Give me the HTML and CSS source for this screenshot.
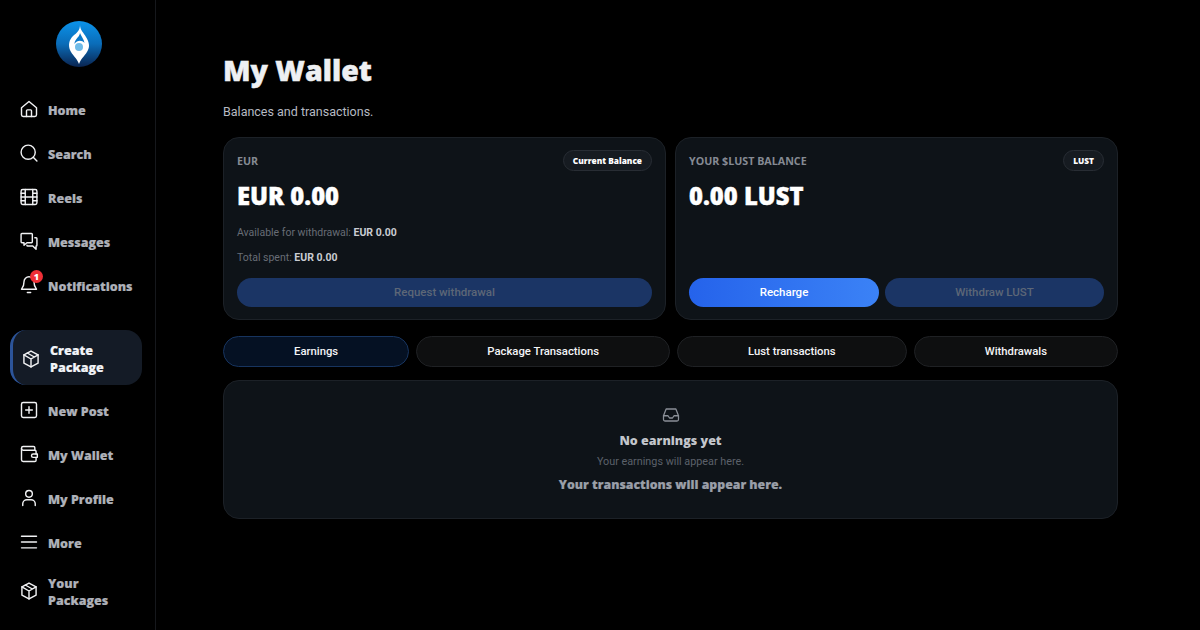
FILE: index.html
```html
<!DOCTYPE html>
<html lang="en">
<head>
    <meta charset="UTF-8">
    <title>My Wallet</title>
    <link rel="stylesheet" href="styles.css">
</head>
<body>
    <div class="layout">
        <!-- Sidebar -->
        <nav class="sidebar">
            <div class="logo">
                <svg width="46" height="46" viewBox="0 0 46 46">
                    <defs>
                        <linearGradient id="logo-bg" x1="0" y1="0" x2="0" y2="1">
                            <stop offset="0" stop-color="#0b93ea"/>
                            <stop offset="0.5" stop-color="#0a6cb8"/>
                            <stop offset="1" stop-color="#0a2450"/>
                        </linearGradient>
                    </defs>
                    <circle cx="23" cy="23" r="23" fill="url(#logo-bg)"/>
                    <path d="M24 4C24 9 28 12 30 16C33 21 34 25 32 29C30 34 25 37 23 43C21 37 16 34 14 29C12 24 13 19 17 15C21 12 24 9 24 4Z" fill="#fff"/>
                    <path d="M24 12C25 15 28 18 28.500 22C26 19 21 19 18.500 23C18.500 18 23 17 24 12Z" fill="#0a78c8"/>
                    <circle cx="23" cy="26" r="4" fill="#6fbbe8"/>
                </svg>
            </div>

            <a class="nav-item">
                <svg class="icon" viewBox="0 0 24 24"><path d="M3 10.500 12 3l9 7.500V19a2 2 0 0 1-2 2H5a2 2 0 0 1-2-2z"/><path d="M9 21v-7a1 1 0 0 1 1-1h4a1 1 0 0 1 1 1v7"/></svg>
                <span>Home</span>
            </a>
            <a class="nav-item">
                <svg class="icon" viewBox="0 0 24 24"><circle cx="11" cy="11" r="8.500"/><path d="m21.500 21.500-4.400-4.400"/></svg>
                <span>Search</span>
            </a>
            <a class="nav-item">
                <svg class="icon" viewBox="0 0 24 24"><rect x="2.500" y="3" width="19" height="18" rx="2"/><path d="M7.500 3v18M16.500 3v18M2.500 12h19M2.500 7.500h5M2.500 16.500h5M16.500 7.500h5M16.500 16.500h5"/></svg>
                <span>Reels</span>
            </a>
            <a class="nav-item">
                <svg class="icon" viewBox="0 0 24 24"><path d="M15 3H3.500a1 1 0 0 0-1 1v9a1 1 0 0 0 1 1H6v3l3.500-3H15a1 1 0 0 0 1-1V4a1 1 0 0 0-1-1z"/><path d="M19 8h1.500a1 1 0 0 1 1 1v8a1 1 0 0 1-1 1V22l-4-4h-6a1 1 0 0 1-1-1"/></svg>
                <span>Messages</span>
            </a>
            <a class="nav-item">
                <span class="icon-wrap">
                    <svg class="icon" viewBox="0 0 24 24"><path d="M6 8a6 6 0 0 1 12 0c0 7 3 8 3 9H3c0-1 3-2 3-9"/><path d="M10 21h4"/></svg>
                    <span class="badge">1</span>
                </span>
                <span>Notifications</span>
            </a>

            <a class="nav-item active">
                <svg class="icon" viewBox="0 0 24 24"><path d="M12 2.500 20.500 7v10L12 21.500 3.500 17V7z"/><path d="M3.500 7 12 12l8.500-5M12 12v9.500M7.500 4.800 16 9.600"/></svg>
                <span>Create Package</span>
            </a>
            <a class="nav-item">
                <svg class="icon" viewBox="0 0 24 24"><rect x="3" y="3" width="18" height="18" rx="2"/><path d="M12 8v8M8 12h8"/></svg>
                <span>New Post</span>
            </a>
            <a class="nav-item">
                <svg class="icon" viewBox="0 0 24 24"><path d="M19 7V4.500A1.500 1.500 0 0 0 17.500 3H5a2 2 0 0 0-2 2v14a2 2 0 0 0 2 2h14a1.500 1.500 0 0 0 1.500-1.500V16"/><path d="M3 5.500A2 2 0 0 0 5 7.500h14a1.500 1.500 0 0 1 1.500 1.500v3"/><path d="M22 12h-5a2 2 0 0 0 0 4h5z"/></svg>
                <span>My Wallet</span>
            </a>
            <a class="nav-item">
                <svg class="icon" viewBox="0 0 24 24"><circle cx="12" cy="7" r="4"/><path d="M4.500 21v-2a5 5 0 0 1 5-5h5a5 5 0 0 1 5 5v2"/></svg>
                <span>My Profile</span>
            </a>
            <a class="nav-item">
                <svg class="icon" viewBox="0 0 24 24"><path d="M3 5h18M3 12h18M3 19h18"/></svg>
                <span>More</span>
            </a>
            <a class="nav-item wrapped">
                <svg class="icon" viewBox="0 0 24 24"><path d="M12 2.500 20.500 7v10L12 21.500 3.500 17V7z"/><path d="M3.500 7 12 12l8.500-5M12 12v9.500M7.500 4.800 16 9.600"/></svg>
                <span>Your Packages</span>
            </a>
        </nav>

        <!-- Main content -->
        <main class="main">
            <h1>My Wallet</h1>
            <p class="subtitle">Balances and transactions.</p>

            <div class="cards">
                <div class="card">
                    <div class="card-head">
                        <span class="card-label">EUR</span>
                        <span class="pill">Current Balance</span>
                    </div>
                    <div class="amount">EUR 0.00</div>
                    <p class="meta">Available for withdrawal: <b>EUR 0.00</b></p>
                    <p class="meta">Total spent: <b>EUR 0.00</b></p>
                    <div class="card-actions">
                        <button type="button" class="btn btn-muted">Request withdrawal</button>
                    </div>
                </div>

                <div class="card">
                    <div class="card-head">
                        <span class="card-label">YOUR $LUST BALANCE</span>
                        <span class="pill">LUST</span>
                    </div>
                    <div class="amount">0.00 LUST</div>
                    <div class="card-actions">
                        <button type="button" class="btn btn-primary">Recharge</button>
                        <button type="button" class="btn btn-muted">Withdraw LUST</button>
                    </div>
                </div>
            </div>

            <!-- Tabs -->
            <div class="tabs">
                <button type="button" class="tab selected">Earnings</button>
                <button type="button" class="tab">Package Transactions</button>
                <button type="button" class="tab">Lust transactions</button>
                <button type="button" class="tab">Withdrawals</button>
            </div>

            <div class="panel">
                <svg class="panel-icon" viewBox="0 0 24 24"><path d="M5.500 4h13l3.500 9v5a2 2 0 0 1-2 2H4a2 2 0 0 1-2-2v-5z"/><path d="M2 13h6l2 3h4l2-3h6"/></svg>
                <div class="empty-title">No earnings yet</div>
                <div class="empty-sub">Your earnings will appear here.</div>
                <div class="empty-note">Your transactions will appear here.</div>
            </div>
        </main>
    </div>
</body>
</html>
```

FILE: styles.css
```css
/* General Styles */
* {
    box-sizing: border-box;
}

body {
    margin: 0;
    background-color: #000;
    color: #fff;
    font-family: 'Open Sans', sans-serif;
    height: 630px;
    overflow: hidden;
}

.layout {
    display: flex;
    height: 630px;
}

/* Sidebar */
.sidebar {
    width: 156px;
    flex-shrink: 0;
    border-right: 1px solid #16181c;
    padding: 21px 13px 0 10px;
}

.logo {
    display: flex;
    justify-content: center;
    height: 67px;
    padding-left: 5px;
}

.nav-item {
    display: flex;
    align-items: center;
    gap: 9px;
    height: 44px;
    padding-left: 9px;
    font-size: 12.500px;
    font-weight: 800;
    line-height: 17px;
    color: #aeb1b9;
    -webkit-text-stroke: 0.2px #aeb1b9;
}

.icon {
    width: 20px;
    height: 20px;
    margin-bottom: 3px;
    flex-shrink: 0;
    fill: none;
    stroke: #f1f2f4;
    stroke-width: 1.700;
    stroke-linecap: round;
    stroke-linejoin: round;
}

.icon-wrap {
    position: relative;
    display: flex;
}

.badge {
    position: absolute;
    top: -5px;
    left: 11px;
    width: 13px;
    height: 13px;
    border-radius: 50%;
    background-color: #ef2f36;
    color: #fff;
    font-size: 9px;
    line-height: 13px;
    text-align: center;
    -webkit-text-stroke: 0;
}

.nav-item.active {
    height: 55px;
    margin: 22px 0 4px;
    padding: 2px 20px 0 8px;
    background-color: #141b26;
    border-left: 3px solid #2c5499;
    border-radius: 16px;
    color: #f2f4f8;
    -webkit-text-stroke: 0.2px #f2f4f8;
}

.nav-item.active .icon {
    margin-bottom: 0;
}

.nav-item.wrapped {
    height: 54px;
    padding-right: 30px;
}

/* Main */
.main {
    flex: 1;
    padding: 50px 82px 0 67px;
}

h1 {
    margin: 0;
    font-size: 28.500px;
    font-weight: 800;
    line-height: 40px;
    color: #eef0f3;
    -webkit-text-stroke: 0.5px #eef0f3;
}

.subtitle {
    margin: 12px 0 15px;
    font-family: 'Roboto', sans-serif;
    font-size: 12.500px;
    line-height: 20px;
    color: #b7bbc3;
}

/* Balance cards */
.cards {
    display: grid;
    grid-template-columns: 1fr 1fr;
    gap: 9px;
}

.card {
    display: flex;
    flex-direction: column;
    height: 183px;
    padding: 12px 13px;
    background-color: #0e1318;
    border: 1px solid #1c2127;
    border-radius: 16px;
}

.card-head {
    display: flex;
    justify-content: space-between;
    align-items: center;
    height: 21px;
}

.card-label {
    font-size: 10.700px;
    font-weight: 700;
    color: #858a93;
}

.pill {
    height: 21px;
    padding: 0 9px;
    background-color: #161b21;
    border: 1px solid #282d34;
    border-radius: 11px;
    font-size: 8.300px;
    font-weight: 800;
    line-height: 19px;
    color: #fff;
}

.amount {
    margin: 10px 0 14px;
    font-size: 23.800px;
    font-weight: 800;
    line-height: 30px;
    color: #fff;
    -webkit-text-stroke: 0.4px #fff;
}

.meta {
    margin: 0 0 9px;
    font-family: 'Roboto', sans-serif;
    font-size: 10.500px;
    line-height: 16px;
    color: #686d76;
}

.meta b {
    font-weight: 700;
    color: #c9ccd2;
}

.card-actions {
    display: flex;
    gap: 6px;
    margin-top: auto;
}

.btn {
    flex: 1 1 auto;
    height: 29px;
    padding-bottom: 2px;
    border: none;
    border-radius: 15px;
    font-family: 'Roboto', sans-serif;
    font-size: 11.500px;
    font-weight: 500;
}

.btn-primary {
    flex: 0 0 190px;
    background: linear-gradient(90deg, #2563eb, #3b82f6);
    color: #fff;
}

.btn-muted {
    background-color: #1b3565;
    color: #5d6777;
}

/* Tabs */
.tabs {
    display: flex;
    gap: 7px;
    margin-top: 16px;
}

.tab {
    flex: 1 1 auto;
    height: 31px;
    background-color: #0e0f10;
    border: 1px solid #1f2124;
    border-radius: 16px;
    color: #f3f4f6;
    font-family: 'Roboto', sans-serif;
    font-size: 11.300px;
    font-weight: 500;
}

.tab.selected {
    background-color: #051123;
    border-color: #17345f;
}

/* Empty panel */
.panel {
    display: flex;
    flex-direction: column;
    align-items: center;
    height: 139px;
    margin-top: 13px;
    padding-top: 25px;
    background-color: #0e1318;
    border: 1px solid #1c2127;
    border-radius: 16px;
}

.panel-icon {
    width: 18px;
    height: 18px;
    fill: none;
    stroke: #8a8f97;
    stroke-width: 1.700;
    stroke-linecap: round;
    stroke-linejoin: round;
}

.empty-title {
    margin-top: 8px;
    font-size: 12.500px;
    font-weight: 800;
    line-height: 18px;
    color: #c3c6cc;
}

.empty-sub {
    margin-top: 4px;
    font-family: 'Roboto', sans-serif;
    font-size: 10.800px;
    line-height: 16px;
    color: #5c616a;
}

.empty-note {
    margin-top: 6px;
    font-size: 12.300px;
    font-weight: 800;
    line-height: 18px;
    color: #9a9fa8;
    -webkit-text-stroke: 0.2px #9a9fa8;
}
```
